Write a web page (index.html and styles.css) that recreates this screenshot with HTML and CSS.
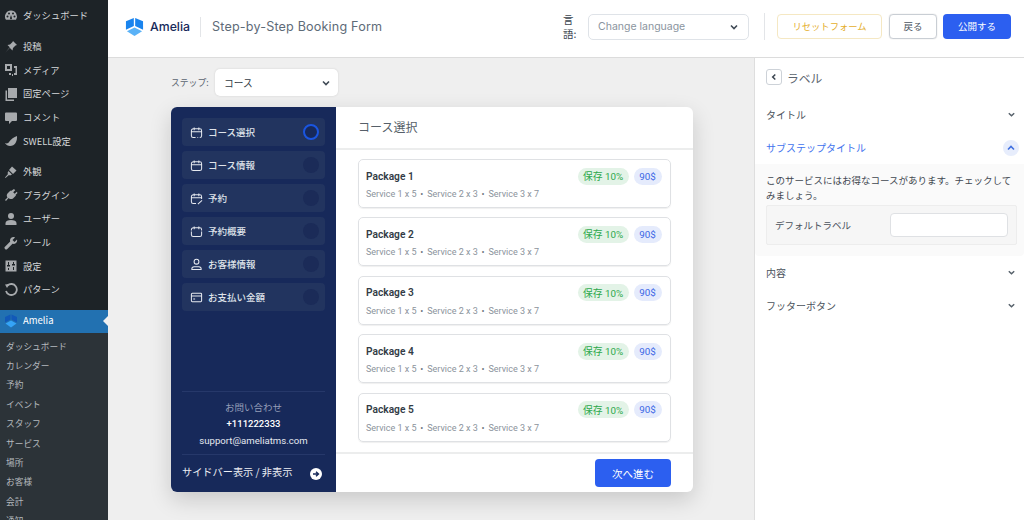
FILE: index.html
```html
<!DOCTYPE html>
<html lang="ja">
<head>
<meta charset="utf-8">
<title>Amelia</title>
<link rel="stylesheet" href="styles.css">
</head>
<body>
<svg class="defs" width="0" height="0">
  <symbol id="cal" viewBox="0 0 14 14"><path d="M3.500 3h7a2 2 0 0 1 2 2v5.500a2 2 0 0 1-2 2h-7a2 2 0 0 1-2-2V5a2 2 0 0 1 2-2zM1.500 6.300h11M4.500 1.500v3M9.500 1.500v3" fill="none" stroke="currentColor" stroke-width="1.100"/></symbol>
  <symbol id="cal-check" viewBox="0 0 14 14"><path d="M6 12.500H3.500a2 2 0 0 1-2-2V5a2 2 0 0 1 2-2h7a2 2 0 0 1 2 2v5.500a2 2 0 0 1-2 2M1.500 6.300h11M4.500 1.500v3M9.500 1.500v3M8 12.500h.8" fill="none" stroke="currentColor" stroke-width="1.100"/></symbol>
  <symbol id="cal-pen" viewBox="0 0 14 14"><path d="M6.500 12.500h-3a2 2 0 0 1-2-2V5a2 2 0 0 1 2-2h7a2 2 0 0 1 2 2v2.500M1.500 6.300h11M4.500 1.500v3M9.500 1.500v3M8.500 13l4.500-4" fill="none" stroke="currentColor" stroke-width="1.100"/></symbol>
  <symbol id="cal-side" viewBox="0 0 14 14"><path d="M1.500 7v3.500a2 2 0 0 0 2 2h7a2 2 0 0 0 2-2V7M1.500 6V5a2 2 0 0 1 2-2h7a2 2 0 0 1 2 2v1M4.500 1.500v3M9.500 1.500v3" fill="none" stroke="currentColor" stroke-width="1.100"/></symbol>
  <symbol id="chev" viewBox="0 0 10 10"><path d="M2 3.500 5 6.500 8 3.500" fill="none" stroke="currentColor" stroke-width="1.600"/></symbol>
</svg>
<nav class="wp">
  <div class="wp-group first">
    <div class="wp-item"><svg class="wi" viewBox="0 0 14 14"><path d="M7 1.500a6 6 0 0 0-5 9.300h10a6 6 0 0 0-5-9.300zM3.500 6.500a1 1 0 1 1 0 2 1 1 0 0 1 0-2zm7 0a1 1 0 1 1 0 2 1 1 0 0 1 0-2zM5 3.500a1 1 0 1 1 0 2 1 1 0 0 1 0-2zm4 0a1 1 0 1 1 0 2 1 1 0 0 1 0-2zM7 6l.8 2.600a1 1 0 1 1-1.600 0z" fill-rule="evenodd"/></svg>ダッシュボード</div>
  </div>
  <div class="wp-group">
    <div class="wp-item"><svg class="wi" viewBox="0 0 14 14"><path d="M9 1l4 4-1.500.5-2.500 2.500-.5 2.500L5.500 7.500 1.500 12.500 1 13l5-5.500L3.500 5l2.500-.5L8.500 2z"/></svg>投稿</div>
    <div class="wp-item"><svg class="wi" viewBox="0 0 14 14"><path d="M1 1h7v7H1zm2 2v3h3V3zM10 3h3v9h-3v-2h1.500V5H10zM5 10h2v2H5zM9 11v2H8v-2z" fill-rule="evenodd"/></svg>メディア</div>
    <div class="wp-item"><svg class="wi" viewBox="0 0 14 14"><path d="M4 1h9v10H4zM1.500 3.500H3v9h7V14H1.500z"/></svg>固定ページ</div>
    <div class="wp-item"><svg class="wi" viewBox="0 0 14 14"><path d="M2 1.500h10a1 1 0 0 1 1 1V9a1 1 0 0 1-1 1H8l-3 3v-3H2a1 1 0 0 1-1-1V2.500a1 1 0 0 1 1-1z"/></svg>コメント</div>
    <div class="wp-item"><svg class="wi" viewBox="0 0 14 14"><path d="M13 2c.5 5-2 10-7 10-2 0-4-1-5-3 2 .8 3 .5 4-1 2-3 5-5 8-6z"/></svg>SWELL設定</div>
  </div>
  <div class="wp-group third">
    <div class="wp-item"><svg class="wi" viewBox="0 0 14 14"><path d="M8 1.500l4.500 4L9 9 5 5zM4.500 6l3.500 3.500-2 1-1-.5-3.500 3-.5-.5 3-3.500-.5-1z"/></svg>外観</div>
    <div class="wp-item"><svg class="wi" viewBox="0 0 14 14"><path d="M10 1l1.200 1.200-2 2 1.500 1.500 2-2L13.500 5l-2 2 .5.500-3 3C7.500 11.500 5.500 11 4.500 10L2 13l-1-1 2.500-2.500C2.500 8.500 2.500 6.500 3.500 5.500l3-3 .5.500z"/></svg>プラグイン</div>
    <div class="wp-item"><svg class="wi" viewBox="0 0 14 14"><circle cx="7" cy="4" r="3"/><path d="M1.500 13v-2C1.500 9 4 8 7 8s5.500 1 5.500 3v2z"/></svg>ユーザー</div>
    <div class="wp-item"><svg class="wi" viewBox="0 0 14 14"><path d="M13 3.500 10.500 6 8.500 4 11 1.500C9 .5 6.500 1.500 6 4c0 .5 0 1 .2 1.500L1 10.700a1.500 1.500 0 0 0 2.300 2.300L8.500 7.800C11 8.500 13.800 6.500 13 3.500z"/></svg>ツール</div>
    <div class="wp-item"><svg class="wi" viewBox="0 0 14 14"><path d="M1.500 1.500h11v11h-11zM4 3v3H3v1.500h3V6H5V3zm5 0v2H8v1.500h3V5h-1V3zM4 9v2h1V9zm5-1v3h1V8z" fill-rule="evenodd"/></svg>設定</div>
    <div class="wp-item"><svg class="wi" viewBox="0 0 14 14"><path d="M3.500 2.500A5.500 5.500 0 1 1 2 8" fill="none" stroke="currentColor" stroke-width="1.800"/><path d="M1 1.500 5.500 1 3 5z"/></svg>パターン</div>
  </div>
  <div class="wp-active">
    <svg class="wi" viewBox="0 0 14 14"><path d="M6.500.5 1 3v5.500l5.500-3z" fill="#1259b8"/><path d="M7.500.5 13 3v5.500l-5.500-3z" fill="#1259b8"/><path d="M7 6.500l5.500 3L7 13.500 1.500 9.500z" fill="#35a4f7"/></svg>Amelia
  </div>
  <div class="wp-sub">
    <div>ダッシュボード</div><div>カレンダー</div><div>予約</div><div>イベント</div><div>スタッフ</div><div>サービス</div><div>場所</div><div>お客様</div><div>会計</div><div>通知</div>
  </div>
</nav>
<div class="app">
  <header class="top">
    <div class="logo">
      <svg class="logo-mark" viewBox="0 0 20 20"><path d="M9.300.5 1 4v9l8.300-4z" fill="#1a84ee"/><path d="M10.700.5 19 4v9l-8.300-4z" fill="#1a84ee"/><path d="M10 10.500 18 14.500l-8 5-8-5z" fill="#5ab2f7"/></svg>
      <span class="logo-text">Amelia</span>
    </div>
    <div class="top-title">Step-by-Step Booking Form</div>
    <div class="lang-label">言語:</div>
    <div class="lang-select"><span>Change language</span><svg class="chev"><use href="#chev"/></svg></div>
    <div class="top-sep"></div>
    <div class="btn btn-reset">リセットフォーム</div>
    <div class="btn btn-back">戻る</div>
    <div class="btn btn-pub">公開する</div>
  </header>
  <div class="work">
    <main class="canvas">
      <div class="step-row">
        <span class="step-label">ステップ:</span>
        <div class="step-select"><span>コース</span><svg class="chev"><use href="#chev"/></svg></div>
      </div>
      <section class="card">
        <aside class="side">
          <div class="side-list">
            <div class="side-item"><svg class="si"><use href="#cal-check"/></svg><span>コース選択</span><i class="dot on"></i></div>
            <div class="side-item"><svg class="si"><use href="#cal"/></svg><span>コース情報</span><i class="dot"></i></div>
            <div class="side-item"><svg class="si"><use href="#cal-pen"/></svg><span>予約</span><i class="dot"></i></div>
            <div class="side-item"><svg class="si"><use href="#cal-side"/></svg><span>予約概要</span><i class="dot"></i></div>
            <div class="side-item"><svg class="si" viewBox="0 0 14 14"><circle cx="7" cy="4" r="2.600" fill="none" stroke="currentColor" stroke-width="1.100"/><path d="M2 12.500v-1c0-1.300 1-2.200 2.500-2.200h5c1.500 0 2.500.9 2.500 2.200v1z" fill="none" stroke="currentColor" stroke-width="1.100"/></svg><span>お客様情報</span><i class="dot"></i></div>
            <div class="side-item"><svg class="si" viewBox="0 0 14 14"><path d="M2.500 2.500h9a1 1 0 0 1 1 1v7a1 1 0 0 1-1 1h-9a1 1 0 0 1-1-1v-7a1 1 0 0 1 1-1zM1.500 5.500h11M3.500 8.500h2" fill="none" stroke="currentColor" stroke-width="1.100"/></svg><span>お支払い金額</span><i class="dot"></i></div>
          </div>
          <div class="contact">
            <div class="c-head">お問い合わせ</div>
            <div class="c-phone">+111222333</div>
            <div class="c-mail">support@ameliatms.com</div>
          </div>
          <div class="side-foot"><span>サイドバー表示 / 非表示</span>
            <svg class="go" viewBox="0 0 12 12"><circle cx="6" cy="6" r="6" fill="#fff"/><path d="M3 6h5.500M6 3.700 8.500 6 6 8.300" fill="none" stroke="#17295a" stroke-width="1.400"/></svg>
          </div>
        </aside>
        <div class="pane">
          <div class="pane-head">コース選択</div>
          <div class="pane-body">
            <article class="pkg"><div class="pkg-top"><b>Package 1</b><span class="tag-g">保存 10%</span><span class="tag-b">90$</span></div><div class="pkg-sub">Service 1 x 5<i>•</i>Service 2 x 3<i>•</i>Service 3 x 7</div></article>
            <article class="pkg"><div class="pkg-top"><b>Package 2</b><span class="tag-g">保存 10%</span><span class="tag-b">90$</span></div><div class="pkg-sub">Service 1 x 5<i>•</i>Service 2 x 3<i>•</i>Service 3 x 7</div></article>
            <article class="pkg"><div class="pkg-top"><b>Package 3</b><span class="tag-g">保存 10%</span><span class="tag-b">90$</span></div><div class="pkg-sub">Service 1 x 5<i>•</i>Service 2 x 3<i>•</i>Service 3 x 7</div></article>
            <article class="pkg"><div class="pkg-top"><b>Package 4</b><span class="tag-g">保存 10%</span><span class="tag-b">90$</span></div><div class="pkg-sub">Service 1 x 5<i>•</i>Service 2 x 3<i>•</i>Service 3 x 7</div></article>
            <article class="pkg"><div class="pkg-top"><b>Package 5</b><span class="tag-g">保存 10%</span><span class="tag-b">90$</span></div><div class="pkg-sub">Service 1 x 5<i>•</i>Service 2 x 3<i>•</i>Service 3 x 7</div></article>
          </div>
          <div class="pane-foot"><div class="btn-next">次へ進む</div></div>
        </div>
      </section>
    </main>
    <aside class="panel">
      <div class="panel-head">
        <span class="back"><svg viewBox="0 0 10 10"><path d="M6.300 2.500 3.700 5l2.600 2.500" fill="none" stroke="currentColor" stroke-width="1.500"/></svg></span>
        <span>ラベル</span>
      </div>
      <div class="acc"><span>タイトル</span><svg class="chev"><use href="#chev"/></svg></div>
      <div class="acc acc-open"><span>サブステップタイトル</span><span class="up"><svg viewBox="0 0 10 10"><path d="M2 6.500 5 3.500 8 6.500" fill="none" stroke="currentColor" stroke-width="1.600"/></svg></span></div>
      <div class="acc-body">
        <p>このサービスにはお得なコースがあります。チェックしてみましょう。</p>
        <div class="field"><span>デフォルトラベル</span><div class="input"></div></div>
      </div>
      <div class="acc"><span>内容</span><svg class="chev"><use href="#chev"/></svg></div>
      <div class="acc"><span>フッターボタン</span><svg class="chev"><use href="#chev"/></svg></div>
    </aside>
  </div>
</div>
</body>
</html>
```
FILE: styles.css
```css
* { box-sizing: border-box; }
html, body { margin: 0; height: 520px; overflow: hidden; }
body { display: flex; width: 1024px; font-family: "Inter", "Noto Sans CJK JP", sans-serif; background: #efefef; color: #4a5560; }
.defs { position: absolute; }

.wp { width: 108px; height: 520px; flex: none; background: #1d2327; color: #d5d8da; font: 9.300px/1 "Noto Sans CJK JP", sans-serif; overflow: hidden; }
.wp-group { padding-top: 7.500px; }
.wp-group.first { padding-top: 4px; }
.wp-group.third { padding-top: 7px; }
.wp-item { display: flex; align-items: center; height: 23.600px; padding-left: 4px; gap: 5px; }
.wi { width: 14px; height: 14px; flex: none; fill: #a7aaad; color: #a7aaad; }
.wp-active { display: flex; align-items: center; gap: 5px; height: 23px; margin-top: 8px; padding-left: 4px; background: #2271b1; color: #fff; position: relative; font-size: 9.500px; }
.wp-active::after { content: ""; position: absolute; right: 0; top: 6px; border: 5px solid transparent; border-right-color: #f0f0f1; border-left-width: 0; }
.wp-sub { background: #2c3338; padding: 4px 0 0 6px; font-size: 8.700px; color: #b4b9be; height: 190px; }
.wp-sub div { height: 19.400px; line-height: 19.400px; }

.app { flex: 1; display: flex; flex-direction: column; min-width: 0; }
.top { height: 58px; flex: none; background: #fff; border-bottom: 1px solid #dcdcdc; display: flex; align-items: center; padding: 0 13px 4px 17px; }
.logo { display: flex; align-items: center; gap: 6px; padding-right: 10px; border-right: 1px solid #e3e5e8; height: 20px; }
.logo-mark { width: 19px; height: 20px; }
.logo-text { font-size: 12.300px; font-weight: 500; color: #17295a; }
.top-title { font-size: 12.600px; color: #5e6b78; margin-left: 11px; letter-spacing: .17px; flex: 1; }
.lang-label { width: 15px; font-size: 10.500px; line-height: 14px; color: #3c4650; font-family: "Noto Sans CJK JP", sans-serif; margin-right: 10px; }
.lang-select { width: 161px; height: 26px; border: 1px solid #dfe3e8; border-radius: 5px; display: flex; align-items: center; justify-content: space-between; padding: 0 9px; font-size: 10.500px; color: #8a949e; }
.chev { width: 10px; height: 10px; color: #3f4a55; flex: none; }
.top-sep { width: 1px; height: 27px; background: #e3e5e8; margin: 0 12px 0 15px; }
.btn { height: 25px; border-radius: 4px; display: flex; align-items: center; justify-content: center; font: 9.500px/1 "Noto Sans CJK JP", sans-serif; }
.btn-reset { width: 105px; border: 1px solid #f5e8c3; color: #e4ae2c; font-size: 9.300px; }
.btn-back { width: 48px; margin-left: 7px; border: 1px solid #c9ced4; color: #4b5560; box-shadow: 0 0 1px #bbb; }
.btn-pub { width: 68px; margin-left: 6px; background: #2c5ff0; color: #fff; }

.work { flex: 1; display: flex; min-height: 0; }
.canvas { flex: 1; padding: 10px 0 0 63px; min-width: 0; }
.step-row { display: flex; align-items: center; height: 29px; margin-bottom: 10px; }
.step-label { width: 44px; flex: none; font: 8.800px "Noto Sans CJK JP", sans-serif; color: #5a6470; }
.step-select { width: 123px; height: 27px; background: #fff; border-radius: 5px; box-shadow: 0 0 2px #ccc; display: flex; align-items: center; justify-content: space-between; padding: 0 7px 0 9px; font: 9.700px "Noto Sans CJK JP", sans-serif; color: #333c46; }

.card { width: 522px; height: 385px; display: flex; border-radius: 6px; overflow: hidden; box-shadow: 0 8px 22px rgba(0,0,0,.16); background: #fff; }
.side { width: 165px; flex: none; background: #17295a; padding: 11px 11px 0; display: flex; flex-direction: column; color: #fff; }
.side-list { display: flex; flex-direction: column; gap: 5px; flex: 1; }
.side-item { height: 28px; background: #22345f; border-radius: 4px; display: flex; align-items: center; padding: 0 6px 0 8px; font: 500 9.500px "Noto Sans CJK JP", sans-serif; color: #dfe3ea; gap: 5px; }
.side-item span { flex: 1; padding-bottom: 1px; }
.si { width: 13px; height: 13px; color: #e6e9ef; flex: none; }
.dot { width: 16px; height: 16px; border-radius: 50%; background: #1b2b58; }
.dot.on { border: 2.500px solid #1a55e0; background: #17295a; }
.contact { border-top: 1px solid #26386a; border-bottom: 1px solid #26386a; height: 64px; padding-top: 10px; text-align: center; display: flex; flex-direction: column; gap: 5px; font-size: 9.500px; }
.c-head { font: 9.500px/11px "Noto Sans CJK JP", sans-serif; color: #959eb8; }
.c-phone { font: 500 9.500px/12px Roboto, sans-serif; }
.c-mail { font: 400 9.600px/12px Roboto, sans-serif; color: #e5e8ef; }
.side-foot { height: 37px; display: flex; align-items: center; justify-content: space-between; padding: 0 3px 0 0; font: 10.200px "Noto Sans CJK JP", sans-serif; color: #eef0f4; }
.side-foot span { padding-bottom: 4px; }
.go { width: 12px; height: 12px; }

.pane { flex: 1; display: flex; flex-direction: column; min-width: 0; }
.pane-head { height: 43px; flex: none; padding: 0 22px 2px; display: flex; align-items: center; font: 12px "Noto Sans CJK JP", sans-serif; color: #565f69; border-bottom: 2px solid #eceded; }
.pane-body { flex: 1; padding: 9px 22px 0; display: flex; flex-direction: column; gap: 9.400px; overflow: hidden; }
.pkg { height: 49px; flex: none; border: 1px solid #dfe1e4; border-radius: 5px; padding: 0 8.500px 0 7px; box-shadow: 0 1px 1px #f0f0f0; }
.pkg-top { height: 26px; margin-top: 3px; display: flex; align-items: center; gap: 5px; }
.pkg-top b { flex: 1; font: 600 10.200px Roboto, sans-serif; color: #333c46; }
.tag-g, .tag-b { height: 17px; border-radius: 9px; display: flex; align-items: center; justify-content: center; font: 9.800px "Roboto", "Noto Sans CJK JP", sans-serif; }
.tag-g { width: 51px; background: #e3f3e7; color: #2da84b; }
.tag-b { width: 28px; background: #e5ebfc; color: #3a66e6; }
.pkg-sub { font: 9px/12px Roboto, sans-serif; color: #8b939c; margin-top: -1px; }
.pkg-sub i { font-style: normal; margin: 0 3.800px; color: #6d757e; }
.pane-foot { height: 40px; flex: none; border-top: 2px solid #eceded; display: flex; align-items: center; justify-content: flex-end; padding: 0 22px; }
.btn-next { width: 76px; height: 28px; background: #2c5ff0; border-radius: 4px; color: #fff; display: flex; align-items: center; justify-content: center; font: 10.500px "Noto Sans CJK JP", sans-serif; }

.panel { width: 270px; flex: none; background: #fff; border-left: 1px solid #dedede; font-family: "Noto Sans CJK JP", sans-serif; }
.panel-head { height: 38px; margin-bottom: 2px; display: flex; align-items: center; gap: 5px; padding-left: 11px; font-size: 11.800px; color: #5b646e; }
.back { width: 16px; height: 16px; border: 1px solid #cdd2d8; border-radius: 3px; display: flex; align-items: center; justify-content: center; color: #3b4550; }
.back svg { width: 10px; height: 10px; }
.acc { height: 33px; display: flex; align-items: center; justify-content: space-between; padding: 0 8px 0 11px; font-size: 10px; color: #4a525c; }
.acc .chev { width: 9px; height: 9px; color: #56606a; }
.acc-open { color: #3f73ee; padding-right: 5px; }
.up { width: 16px; height: 16px; border-radius: 50%; background: #e7edfc; color: #3f6fe0; display: flex; align-items: center; justify-content: center; }
.up svg { width: 10px; height: 10px; }
.acc-body { background: #fafafa; padding: 9px 7px 0 11px; height: 92px; border-radius: 0 0 4px 4px; }
.acc-body p { margin: 0 0 3px; font-size: 9.500px; line-height: 14.500px; color: #3f4750; }
.field { height: 40px; width: 251px; background: #f6f6f6; border: 1px solid #ededed; border-radius: 2px; display: flex; align-items: center; justify-content: space-between; padding: 0 8px; font-size: 9.500px; color: #4a525c; }
.input { width: 118px; height: 24px; background: #fff; border: 1px solid #dfe1e4; border-radius: 4px; }
```
